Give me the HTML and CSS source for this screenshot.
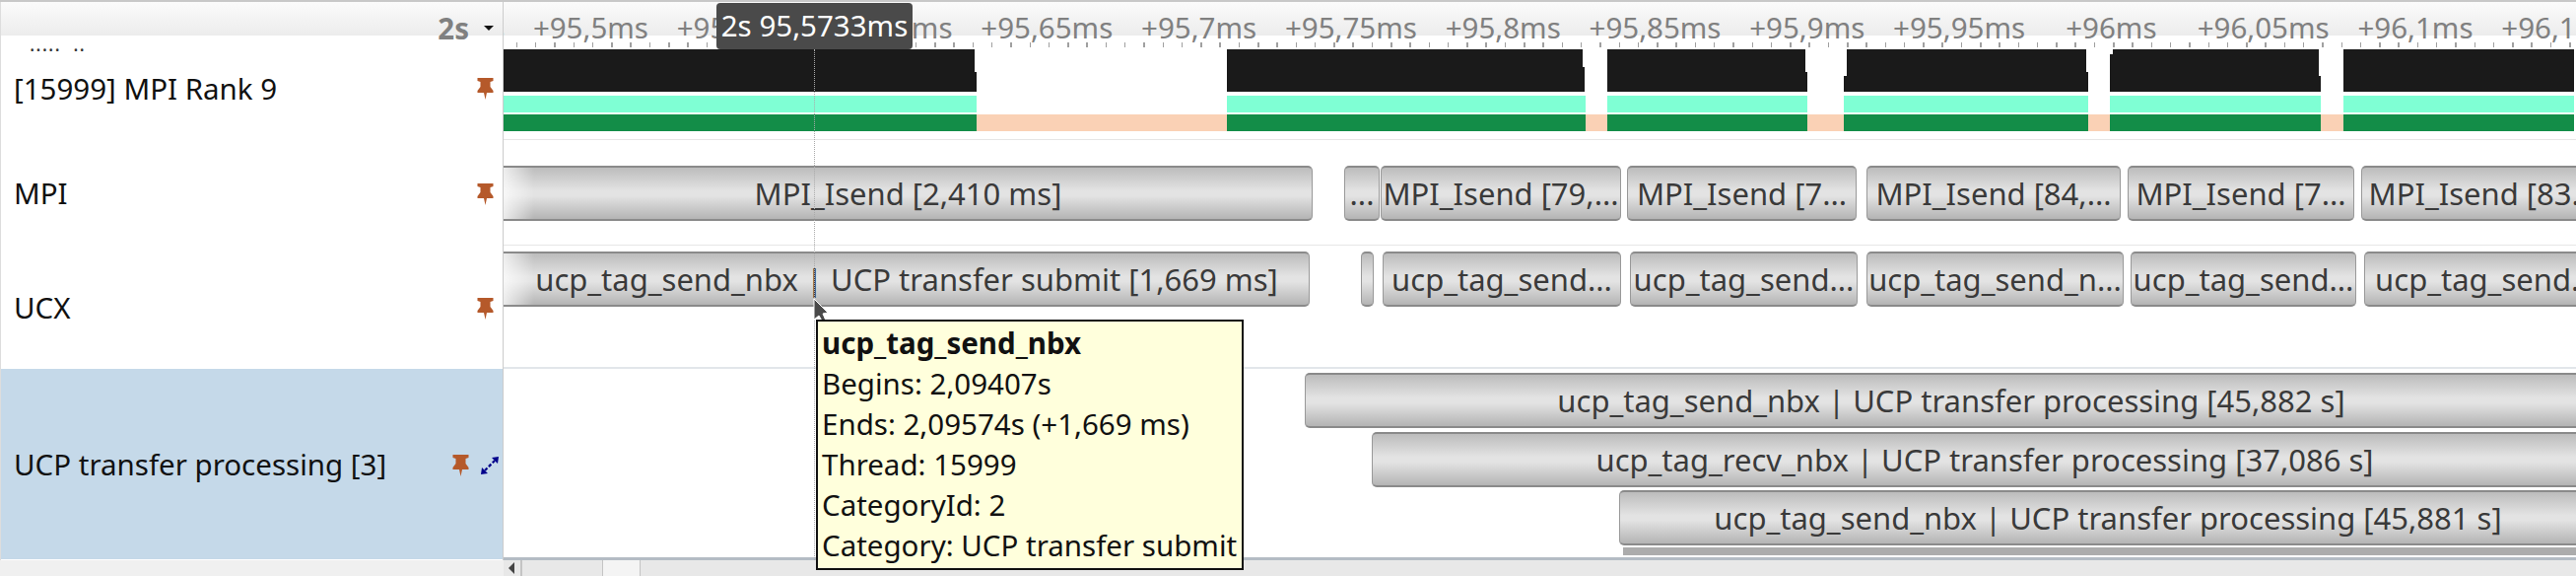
FILE: index.html
```html
<!DOCTYPE html>
<html lang="en">
<head>
	<meta charset="UTF-8">
	<title>Timeline</title>
	<link rel="stylesheet" href="styles.css">
</head>
<body>
<div class="app">
	<div class="topline"></div>
	<div class="main">
		<div class="side">
			<div class="corner"><span class="base-time">2s</span><span class="caret"></span></div>
			<div class="row row-thread">
				<span class="dots">..... &nbsp;..</span>
				<span class="name">[15999] MPI Rank 9</span>
				<svg class="pin" viewBox="0 0 17 22"><use href="#pin"/></svg>
			</div>
			<div class="row row-mpi">
				<span class="name">MPI</span>
				<svg class="pin" viewBox="0 0 17 22"><use href="#pin"/></svg>
			</div>
			<div class="row row-ucx">
				<span class="name">UCX</span>
				<svg class="pin" viewBox="0 0 17 22"><use href="#pin"/></svg>
			</div>
			<div class="row row-proc">
				<span class="name">UCP transfer processing [3]</span>
				<svg class="pin" viewBox="0 0 17 22"><use href="#pin"/></svg>
				<svg class="expand" viewBox="0 0 18 18">
					<path d="M4 14 L14 4" stroke="#00008b" stroke-width="2.2" stroke-dasharray="3.5 2"/>
					<path d="M0 18 L1 11 L7 17 Z M18 0 L17 7 L11 1 Z" fill="#00008b"/>
				</svg>
			</div>
		</div>
		<div class="timeline">
			<div class="ruler">
				<div class="labels">
					<span>+95,45ms</span><span>+95,5ms</span><span>+95,55ms</span><span>+95,6ms</span><span>+95,65ms</span><span>+95,7ms</span><span>+95,75ms</span><span>+95,8ms</span><span>+95,85ms</span><span>+95,9ms</span><span>+95,95ms</span><span>+96ms</span><span>+96,05ms</span><span>+96,1ms</span><span>+96,15ms</span>
				</div>
				<div class="ticks"></div>
			</div>
			<div class="track track-thread">
				<div class="lane lane-black">
					<i style="left:0;width:480px"></i>
					<i style="left:734px;width:363px"></i>
					<i style="left:1120px;width:203px"></i>
					<i style="left:1360px;width:248px"></i>
					<i style="left:1630px;width:214px"></i>
					<i style="left:1867px;width:234px"></i>
					<b style="left:478px;height:23px"></b>
					<b style="left:1095px;height:18px"></b>
					<b style="left:1321px;height:23px"></b>
					<b style="left:1360px;height:27px"></b>
					<b style="left:1606px;height:23px"></b>
					<b style="left:1630px;height:5px"></b>
					<b style="left:1842px;height:27px"></b>
				</div>
				<div class="lane lane-mint">
					<i style="left:0;width:480px"></i>
					<i style="left:734px;width:364px"></i>
					<i style="left:1120px;width:203px"></i>
					<i style="left:1360px;width:248px"></i>
					<i style="left:1630px;width:214px"></i>
					<i style="left:1867px;width:234px"></i>
				</div>
				<div class="lane lane-state">
					<i style="left:0;width:480px"></i>
					<u style="left:480px;width:254px"></u>
					<i style="left:734px;width:364px"></i>
					<u style="left:1098px;width:22px"></u>
					<i style="left:1120px;width:203px"></i>
					<u style="left:1323px;width:37px"></u>
					<i style="left:1360px;width:248px"></i>
					<u style="left:1608px;width:22px"></u>
					<i style="left:1630px;width:214px"></i>
					<u style="left:1844px;width:23px"></u>
					<i style="left:1867px;width:234px"></i>
				</div>
			</div>
			<div class="track track-mpi">
				<div class="bar bar-first" style="left:-6px;width:827px">MPI_Isend [2,410 ms]</div>
				<div class="bar" style="left:853px;width:36px">...</div>
				<div class="bar" style="left:890px;width:244px">MPI_Isend [79,...</div>
				<div class="bar" style="left:1140px;width:233px">MPI_Isend [7...</div>
				<div class="bar" style="left:1383px;width:258px">MPI_Isend [84,...</div>
				<div class="bar" style="left:1648px;width:230px">MPI_Isend [7...</div>
				<div class="bar" style="left:1885px;width:246px">MPI_Isend [83...</div>
			</div>
			<div class="track track-ucx">
				<div class="bar bar-first" style="left:-6px;width:824px">ucp_tag_send_nbx | UCP transfer submit [1,669 ms]</div>
				<div class="bar" style="left:870px;width:13px"></div>
				<div class="bar" style="left:892px;width:242px">ucp_tag_send...</div>
				<div class="bar" style="left:1143px;width:231px">ucp_tag_send...</div>
				<div class="bar" style="left:1383px;width:261px">ucp_tag_send_n...</div>
				<div class="bar" style="left:1651px;width:229px">ucp_tag_send...</div>
				<div class="bar" style="left:1888px;width:246px">ucp_tag_send...</div>
			</div>
			<div class="track track-proc">
				<div class="bar" style="left:813px;width:1312px">ucp_tag_send_nbx | UCP transfer processing [45,882 s]</div>
				<div class="bar" style="left:881px;width:1244px">ucp_tag_recv_nbx | UCP transfer processing [37,086 s]</div>
				<div class="bar" style="left:1132px;width:992px">ucp_tag_send_nbx | UCP transfer processing [45,881 s]</div>
				<div class="more" style="left:1136px;width:1000px"></div>
			</div>
		</div>
	</div>
	<div class="scrollbar">
		<div class="scroll-left"></div>
		<div class="scroll-arrow"></div>
		<div class="scroll-track"><div class="scroll-thumb"></div></div>
	</div>

	<div class="cursor-line"></div>
	<div class="time-label">2s 95,5733ms</div>
	<svg class="cursor" viewBox="0 0 16 26">
		<path d="M1 1 L1 22 L6 18 L10 25 L13 23 L10 16 L15 15 Z" fill="#4a4a4a" stroke="#fff" stroke-width="1"/>
	</svg>
	<div class="tooltip">
		<strong>ucp_tag_send_nbx</strong>
		<div>Begins: 2,09407s</div>
		<div>Ends: 2,09574s (+1,669 ms)</div>
		<div>Thread: 15999</div>
		<div>CategoryId: 2</div>
		<div>Category: UCP transfer submit</div>
	</div>
</div>
<svg class="defs" width="0" height="0">
	<symbol id="pin" viewBox="0 0 17 22">
		<path d="M0.5 0 H16.5 V3 L13.5 4 L13.5 9 L16.5 13 V15 H10 L8.5 22 L7 15 H0.5 V13 L3.5 9 L3.5 4 L0.5 3 Z" fill="#b5592a"/>
	</symbol>
</svg>
</body>
</html>
```

FILE: styles.css
```css
html,body{
	margin:0;
	padding:0;
	background:#fff;
	overflow:hidden;
}
.defs{
	display:block;
}
.app{
	position:relative;
	width:2614px;
	height:584px;
	overflow:hidden;
	display:flex;
	flex-direction:column;
	font-family:"Noto Sans",sans-serif;
	font-size:29.5px;
	color:#111;
}
.topline{
	height:2px;
	background:#c8c8c8;
}
.main{
	height:566px;
	display:flex;
	border-left:1px solid #ddd;
}

/* left column */
.side{
	width:509px;
	flex:none;
	display:flex;
	flex-direction:column;
	border-right:1px solid #ccc;
}
.corner{
	height:34px;
	display:flex;
	align-items:center;
	justify-content:flex-end;
	padding-right:9px;
	background:linear-gradient(#fbfbfb,#ececec);
}
.base-time{
	font-weight:bold;
	color:#808080;
	margin-right:15px;
	padding-top:18px;
}
.caret{
	width:0;
	height:0;
	border:5px solid transparent;
	border-top-color:#111;
	border-bottom:none;
	margin-top:18px;
}
.row{
	position:relative;
	display:flex;
	align-items:center;
	padding:0 9px 0 13px;
	overflow:hidden;
}
.row-thread{
	height:106px;
}
.row-mpi{
	height:107px;
}
.row-ucx{
	height:125px;
}
.row-proc{
	height:193px;
	padding-right:4px;
	background:#c5d9e9;
}
.name{
	flex:1;
	white-space:nowrap;
}
.pin{
	width:17px;
	height:22px;
	flex:none;
	margin-top:2px;
}
.expand{
	width:18px;
	height:18px;
	flex:none;
	margin-left:12px;
	margin-top:2px;
}
.dots{
	position:absolute;
	left:29px;
	top:-5px;
	font-size:20px;
	letter-spacing:1px;
	color:#333;
}

/* right column */
.timeline{
	flex:1;
	min-width:0;
	overflow:hidden;
}
.ruler{
	position:relative;
	height:48px;
	overflow:hidden;
	background:linear-gradient(#fbfbfb,#ececec 34px,#fff 34px);
}
.labels{
	display:flex;
	margin-left:-143px;
	padding-top:7px;
	color:#808080;
	line-height:38px;
}
.labels span{
	width:154.3px;
	flex:none;
	text-align:center;
	white-space:nowrap;
}
.ticks{
	position:absolute;
	left:0;
	right:0;
	top:41px;
	height:5px;
	background:
		repeating-linear-gradient(90deg,#a0a0a0 12.7px,#a0a0a0 14.2px,transparent 14.2px,transparent 31.99px);
}
.track{
	position:relative;
	box-sizing:border-box;
	border-bottom:1px solid #e6e6e6;
}
.track-thread{
	height:92px;
}
.track-mpi{
	height:107px;
}
.track-ucx{
	height:125px;
	border-bottom:2px solid #e2e6ea;
}
.track-proc{
	height:194px;
	border-bottom:3px solid #b4bcc4;
}
.lane{
	position:absolute;
	left:0;
	right:0;
}
.lane i,.lane u,.lane b{
	position:absolute;
	top:0;
	bottom:0;
}
.lane b{
	bottom:auto;
	width:3px;
	background:#fff;
}
.lane-black{
	top:0;
	height:43px;
}
.lane-black i{
	background:#1a1a1a;
}
.lane-mint{
	top:47px;
	height:17px;
}
.lane-mint i{
	background:#7fffd4;
}
.lane-state{
	top:66px;
	height:17px;
}
.lane-state i{
	background:#138d48;
}
.lane-state u{
	background:#fad1b5;
}

/* event boxes */
.bar{
	position:absolute;
	box-sizing:border-box;
	height:56px;
	font-size:31px;
	line-height:52px;
	text-align:center;
	white-space:nowrap;
	overflow:hidden;
	color:#3a3a3a;
	border:1px solid #999;
	border-top:2px solid #8a8a8a;
	border-bottom:2px solid #8a8a8a;
	border-radius:5px;
	background:linear-gradient(#bcbcbc,#e3e3e3 45%,#e3e3e3 55%,#b4b4b4);
}
.bar-first{
	padding-left:6px;
}
.bar-first::before{
	content:'';
	position:absolute;
	left:0;
	top:0;
	bottom:0;
	width:36px;
	background:linear-gradient(90deg,rgba(255,255,255,.85),rgba(255,255,255,0));
}
.track-mpi .bar{
	top:26px;
}
.track-ucx .bar{
	top:6px;
}
.track-proc .bar:nth-child(1){
	top:4px;
}
.track-proc .bar:nth-child(2){
	top:64px;
}
.track-proc .bar:nth-child(3){
	top:123px;
}
.more{
	position:absolute;
	top:181px;
	height:8px;
	background:#acacac;
}

/* bottom scrollbar */
.scrollbar{
	height:16px;
	display:flex;
	background:#e8e8e8;
}
.scroll-left{
	width:511px;
	flex:none;
	background:#f0f0f0;
}
.scroll-arrow{
	width:19px;
	flex:none;
	box-sizing:border-box;
	border-right:2px solid #c4c4c4;
	position:relative;
}
.scroll-arrow::before{
	content:'';
	position:absolute;
	left:5px;
	top:2px;
	border:6px solid transparent;
	border-right-color:#444;
	border-left:none;
}
.scroll-track{
	flex:1;
	padding-left:81px;
}
.scroll-thumb{
	box-sizing:border-box;
	width:39px;
	height:16px;
	background:#f4f4f4;
	border-left:1px solid #c4c4c4;
	border-right:1px solid #c4c4c4;
}

/* things lying over the timeline */
.cursor-line{
	position:absolute;
	left:826px;
	top:50px;
	height:518px;
	border-left:1px dotted #aaa;
}
.time-label{
	position:absolute;
	left:727px;
	top:3px;
	width:199px;
	height:47px;
	line-height:46px;
	text-align:center;
	white-space:nowrap;
	color:#fff;
	background:#4a4a4a;
	border-radius:4px;
}
.cursor{
	position:absolute;
	left:825px;
	top:302px;
	width:16px;
	height:26px;
}
.tooltip{
	position:absolute;
	left:828px;
	top:324px;
	box-sizing:border-box;
	width:434px;
	height:254px;
	padding:1px 4px;
	border:2px solid #111;
	background:#ffffdc;
	line-height:41px;
	color:#111;
	white-space:nowrap;
}
.tooltip strong{
	display:block;
}
```
